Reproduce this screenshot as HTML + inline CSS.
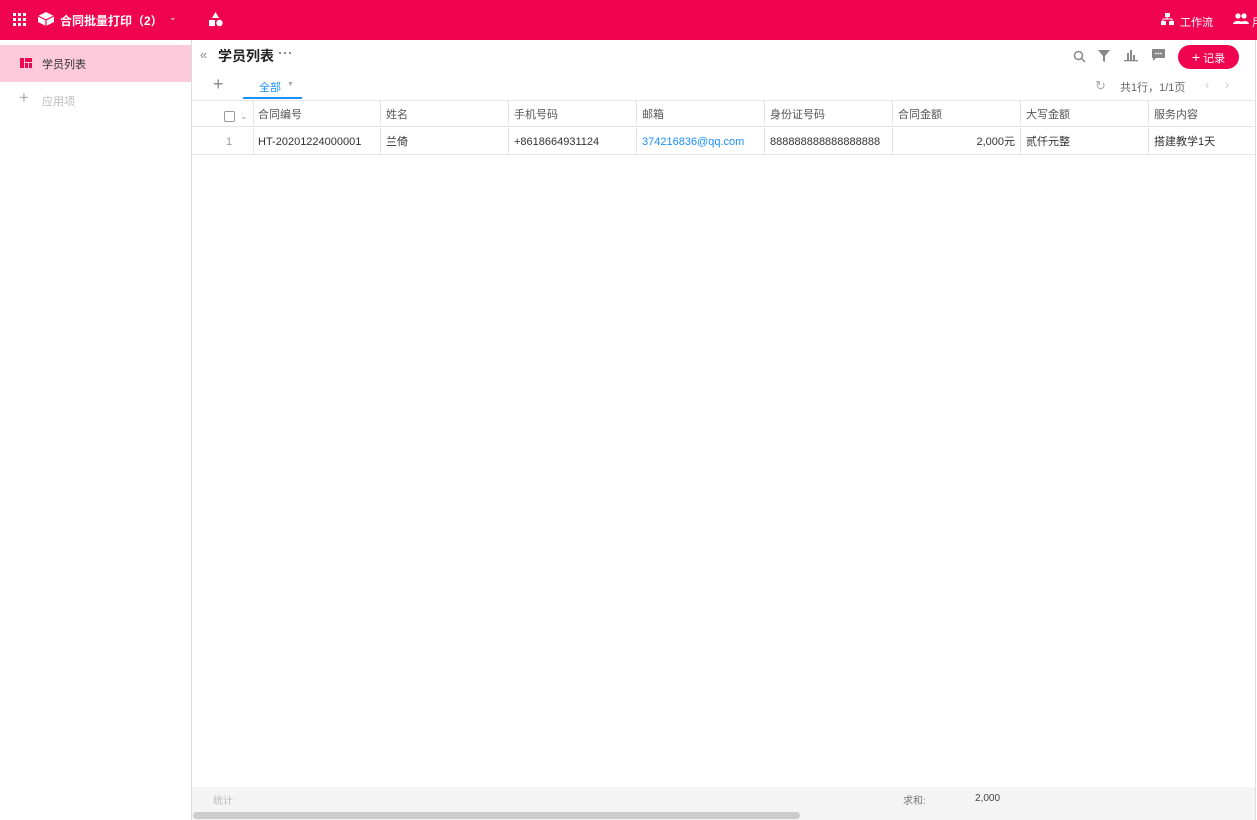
<!DOCTYPE html>
<html><head><meta charset="utf-8"><style>
*{box-sizing:border-box;margin:0;padding:0}
body{width:1257px;height:820px;overflow:hidden;background:#fff;font-family:"Liberation Sans","Noto Sans CJK SC",sans-serif;font-size:11px;color:#333;position:relative}
.top{position:absolute;left:0;top:0;width:1257px;height:40px;background:#f0044f;color:#fff}
.side{position:absolute;left:0;top:40px;width:192px;height:780px;border-right:1px solid #ddd;background:#fff}
.abs{position:absolute}
.cell{position:absolute;top:0;height:100%;border-right:1px solid #e6e6e6;padding-left:5px;line-height:28px;white-space:nowrap}
.row{position:absolute;left:192px;width:1064px;height:27px;border-bottom:1px solid #e6e6e6}
</style></head><body>
<div class="top">
 <svg class="abs" style="left:13px;top:13px" width="14" height="14" fill="#fff"><g><rect x="0" y="0" width="3" height="3"/><rect x="5" y="0" width="3" height="3"/><rect x="10" y="0" width="3" height="3"/><rect x="0" y="5" width="3" height="3"/><rect x="5" y="5" width="3" height="3"/><rect x="10" y="5" width="3" height="3"/><rect x="0" y="10" width="3" height="3"/><rect x="5" y="10" width="3" height="3"/><rect x="10" y="10" width="3" height="3"/></g></svg>
 <svg class="abs" style="left:37px;top:11px" width="18" height="17"><path d="M9 1L17 5V11L9 15L1 11V5Z" fill="#fff"/><path d="M1 5L9 9L17 5M9 9V15" stroke="#f0044f" stroke-width="1.2" fill="none"/></svg>
 <div class="abs" style="left:60px;top:12px;font-size:12px;font-weight:bold">合同批量打印（2）</div>
 <div class="abs" style="left:169px;top:12px;font-size:9px">⌄</div>
 <svg class="abs" style="left:208px;top:12px" width="16" height="15" fill="#fff"><path d="M7.5 0L11 6H4Z"/><rect x="1" y="8" width="6" height="6"/><circle cx="11.5" cy="11" r="3.2"/></svg>
 <svg class="abs" style="left:1161px;top:13px" width="13" height="13" fill="#fff"><rect x="4" y="0" width="5" height="4"/><rect x="0" y="8" width="5" height="4"/><rect x="8" y="8" width="5" height="4"/><path d="M6 4v2H2v2M11 8V6H6" stroke="#fff" fill="none"/></svg>
 <div class="abs" style="left:1180px;top:14px;font-size:11px">工作流</div>
 <svg class="abs" style="left:1233px;top:13px" width="16" height="12" fill="#fff"><circle cx="5" cy="3" r="2.6"/><circle cx="11" cy="3" r="2.6"/><path d="M0 11c0-4 10-4 10 0zM7 11c0-4 9-4 9 0z"/></svg>
 <div class="abs" style="left:1252px;top:14px;font-size:11px">用</div>
</div>
<div class="side">
 <div class="abs" style="left:0;top:5px;width:191px;height:37px;background:#fdcadc"></div>
 <svg class="abs" style="left:20px;top:18px" width="12" height="10" fill="#f0044f"><rect x="0" y="0" width="4" height="10"/><rect x="5" y="0" width="7" height="4"/><rect x="5" y="5" width="3" height="5"/><rect x="9" y="5" width="3" height="5"/></svg>
 <div class="abs" style="left:42px;top:16px;font-size:11px;color:#333">学员列表</div>
 <div class="abs" style="left:19px;top:48px;font-size:17px;color:#aaa;font-weight:300">+</div>
 <div class="abs" style="left:42px;top:53px;font-size:11px;color:#bbb">应用项</div>
</div>
<div class="abs" style="left:200px;top:47px;color:#888;font-size:13px">«</div>
<div class="abs" style="left:218px;top:46px;font-size:14px;font-weight:bold;color:#222">学员列表</div>
<div class="abs" style="left:279px;top:52px;width:12px;height:3px;display:flex;justify-content:space-between"><i style="width:2px;height:2px;background:#666;border-radius:1px"></i><i style="width:2px;height:2px;background:#666;border-radius:1px"></i><i style="width:2px;height:2px;background:#666;border-radius:1px"></i></div>
<div class="abs" style="left:213px;top:74px;font-size:18px;color:#888;font-weight:300">+</div>
<div class="abs" style="left:259px;top:79px;font-size:11px;color:#1a90ff">全部</div>
<div class="abs" style="left:287px;top:81px;font-size:7px;color:#aaa">▼</div>
<div class="abs" style="left:243px;top:97px;width:59px;height:2px;background:#1a90ff"></div>
<svg class="abs" style="left:1073px;top:50px" width="13" height="13" stroke="#888" stroke-width="1.5" fill="none"><circle cx="5.5" cy="5.5" r="4"/><path d="M8.5 8.5L12 12"/></svg>
<svg class="abs" style="left:1098px;top:50px" width="12" height="12" fill="#888"><path d="M0 0H12L7 6V12L5 11V6Z"/></svg>
<svg class="abs" style="left:1124px;top:49px" width="14" height="13" fill="#888"><rect x="3" y="4" width="2" height="7"/><rect x="6" y="1" width="2" height="10"/><rect x="9" y="6" width="2" height="5"/><rect x="0" y="11" width="14" height="1.3"/></svg>
<svg class="abs" style="left:1152px;top:49px" width="13" height="12" fill="#888"><path d="M0 0H13V9H4L1 12V9H0Z"/><circle cx="4" cy="4.5" r=".9" fill="#fff"/><circle cx="6.5" cy="4.5" r=".9" fill="#fff"/><circle cx="9" cy="4.5" r=".9" fill="#fff"/></svg>
<div class="abs" style="left:1178px;top:45px;width:61px;height:24px;border-radius:12px;background:#f0044f;color:#fff;font-size:11px;line-height:24px;text-align:center"><b style="font-size:14px;font-weight:normal">+</b> 记录</div>
<div class="abs" style="left:1095px;top:78px;color:#aaa;font-size:13px">↻</div>
<div class="abs" style="left:1120px;top:79px;color:#666">共1行，1/1页</div>
<div class="abs" style="left:1205px;top:77px;color:#ccc;font-size:13px">‹</div>
<div class="abs" style="left:1225px;top:77px;color:#ccc;font-size:13px">›</div>
<div class="abs" style="left:1255px;top:40px;width:1px;height:780px;background:#ddd"></div>
<div class="row" style="top:100px;border-top:1px solid #e6e6e6;color:#555">
 <div class="cell" style="left:0;width:62px"><span class="abs" style="left:32px;top:10px;width:11px;height:11px;border:1px solid #999;border-radius:2px"></span><span class="abs" style="left:48px;top:1px;font-size:9px;color:#999">⌄</span></div>
 <div class="cell" style="left:61px;width:128px">合同编号</div>
 <div class="cell" style="left:189px;width:128px">姓名</div>
 <div class="cell" style="left:317px;width:128px">手机号码</div>
 <div class="cell" style="left:445px;width:128px">邮箱</div>
 <div class="cell" style="left:573px;width:128px">身份证号码</div>
 <div class="cell" style="left:701px;width:128px">合同金额</div>
 <div class="cell" style="left:829px;width:128px">大写金额</div>
 <div class="cell" style="left:957px;width:107px;border-right:none">服务内容</div>
</div>
<div class="row" style="top:128px;color:#333">
 <div class="cell" style="left:0;width:62px;color:#999;padding-left:34px">1</div>
 <div class="cell" style="left:61px;width:128px">HT-20201224000001</div>
 <div class="cell" style="left:189px;width:128px">兰倚</div>
 <div class="cell" style="left:317px;width:128px">+8618664931124</div>
 <div class="cell" style="left:445px;width:128px;color:#1a90ff">374216836@qq.com</div>
 <div class="cell" style="left:573px;width:128px">888888888888888888</div>
 <div class="cell" style="left:701px;width:128px;text-align:right;padding-right:5px">2,000元</div>
 <div class="cell" style="left:829px;width:128px">贰仟元整</div>
 <div class="cell" style="left:957px;width:107px;border-right:none">搭建教学1天</div>
</div>
<div class="abs" style="left:192px;top:787px;width:1063px;height:33px;background:#f4f4f4"></div>
<div class="abs" style="left:213px;top:792px;color:#bbb;font-size:10px">统计</div>
<div class="abs" style="left:903px;top:792px;color:#777;font-size:10px">求和:</div>
<div class="abs" style="left:975px;top:793px;color:#444;font-size:10px">2,000</div>
<div class="abs" style="left:193px;top:812px;width:607px;height:7px;border-radius:4px;background:#ccc"></div>
</body></html>
